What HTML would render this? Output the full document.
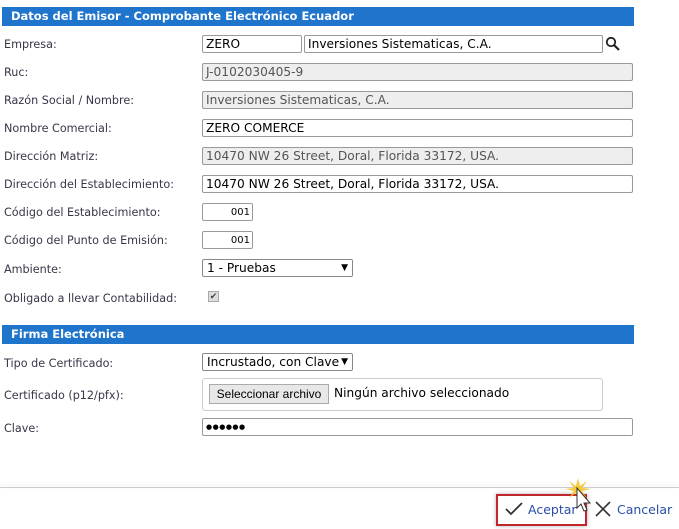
<!DOCTYPE html>
<html><head><meta charset="utf-8"><style>
body{margin:0;width:679px;height:529px;background:#fff;font-family:Verdana,"DejaVu Sans",sans-serif;font-size:11px;color:#3a3548;position:relative;overflow:hidden}
.hd{position:absolute;left:2px;width:632px;height:19px;background:#1f74cc;color:#fff;font-weight:bold;font-size:11.5px;line-height:19px;padding-left:9px;box-sizing:border-box}
.lb{position:absolute;left:4px;font-size:11.2px}
.in{position:absolute;height:18px;border:1px solid #999;border-radius:2px;box-sizing:border-box;font-size:12.2px;line-height:17px;padding-left:3px;color:#000;background:#fff;white-space:nowrap;overflow:hidden}
.ro{background:#eee;color:#555}
.sel{position:absolute;height:18px;border:1px solid #888;border-radius:2px;box-sizing:border-box;font-size:12.2px;line-height:17px;padding-left:4px;color:#000;background:#fff;overflow:hidden;white-space:nowrap}
.sel:after{content:"▼";position:absolute;right:4px;top:0;font-size:9px;background:#fff;padding-left:2px}
</style></head><body>
<div class="hd" style="top:7px">Datos del Emisor - Comprobante Electrónico Ecuador</div>
<div class="lb" style="top:38px">Empresa:</div>
<div class="in" style="left:202px;top:35px;width:100px">ZERO</div>
<div class="in" style="left:304px;top:35px;width:299px">Inversiones Sistematicas, C.A.</div>
<svg style="position:absolute;left:605px;top:36px" width="16" height="16"><circle cx="6" cy="6" r="4.2" fill="none" stroke="#222" stroke-width="1.8"/><line x1="9" y1="9" x2="14" y2="14" stroke="#222" stroke-width="2.2"/></svg>
<div class="lb" style="top:66px">Ruc:</div>
<div class="in ro" style="left:202px;top:63px;width:431px">J-0102030405-9</div>
<div class="lb" style="top:94px">Razón Social / Nombre:</div>
<div class="in ro" style="left:202px;top:91px;width:431px">Inversiones Sistematicas, C.A.</div>
<div class="lb" style="top:122px">Nombre Comercial:</div>
<div class="in" style="left:202px;top:119px;width:431px">ZERO COMERCE</div>
<div class="lb" style="top:150px">Dirección Matriz:</div>
<div class="in ro" style="left:202px;top:147px;width:431px">10470 NW 26 Street, Doral, Florida 33172, USA.</div>
<div class="lb" style="top:178px">Dirección del Establecimiento:</div>
<div class="in" style="left:202px;top:175px;width:431px">10470 NW 26 Street, Doral, Florida 33172, USA.</div>
<div class="lb" style="top:206px">Código del Establecimiento:</div>
<div class="in" style="left:202px;top:203px;width:51px;text-align:right;padding-right:2px;font-size:10px">001</div>
<div class="lb" style="top:234px">Código del Punto de Emisión:</div>
<div class="in" style="left:202px;top:231px;width:51px;text-align:right;padding-right:2px;font-size:10px">001</div>
<div class="lb" style="top:263px">Ambiente:</div>
<div class="sel" style="left:202px;top:259px;width:151px">1 - Pruebas</div>
<div class="lb" style="top:292px">Obligado a llevar Contabilidad:</div>
<div style="position:absolute;left:208px;top:291px;width:11px;height:11px;border:1px solid #aaa;background:#ddd;font-size:9px;line-height:11px;text-align:center;color:#444;box-sizing:border-box">✔</div>
<div class="hd" style="top:325px">Firma Electrónica</div>
<div class="lb" style="top:357px">Tipo de Certificado:</div>
<div class="sel" style="left:202px;top:353px;width:151px">Incrustado, con Clave</div>
<div class="lb" style="top:389px">Certificado (p12/pfx):</div>
<div style="position:absolute;left:202px;top:378px;width:401px;height:33px;border:1px solid #ccc;border-radius:3px;box-sizing:border-box"></div>
<div style="position:absolute;left:209px;top:384px;width:120px;height:20px;border:1px solid #aaa;background:#e8e8e8;box-sizing:border-box;font-family:Arial,'Liberation Sans',sans-serif;font-size:12px;line-height:18px;text-align:center;color:#000">Seleccionar archivo</div>
<div style="position:absolute;left:334px;top:386px;font-size:12.2px;color:#000">Ningún archivo seleccionado</div>
<div class="lb" style="top:422px">Clave:</div>
<div class="in" style="left:202px;top:418px;width:431px;font-size:7px;letter-spacing:0.5px">●●●●●●</div>
<div style="position:absolute;left:0;top:487px;width:679px;height:1px;background:#ccc;box-shadow:0 -2px 4px rgba(0,0,0,.12)"></div>
<div style="position:absolute;left:496px;top:494px;width:91px;height:32px;border:2px solid #c0262b;box-sizing:border-box;box-shadow:0 0 4px rgba(0,0,0,.3)"></div>
<svg style="position:absolute;left:505px;top:502px" width="18" height="14"><path d="M1 7 L6 12 L17 1" fill="none" stroke="#333" stroke-width="1.8"/></svg>
<div style="position:absolute;left:528px;top:502px;font-size:12.5px;color:#2a4fa8">Aceptar</div>
<svg style="position:absolute;left:595px;top:501px" width="16" height="16"><path d="M1 1L15 15M15 1L1 15" stroke="#333" stroke-width="1.6"/></svg>
<div style="position:absolute;left:617px;top:502px;font-size:12.5px;color:#2a4fa8">Cancelar</div>
<svg style="position:absolute;left:565px;top:478px" width="30" height="36"><polygon points="13,0 15,8 22,3 17,10 26,11 17,13 22,20 15,15 13,23 11,15 4,20 9,13 0,11 9,10 4,3 11,8" fill="#f4c21c" opacity=".85"/><path d="M12 10 L12 30 L16 26 L19 33 L22 32 L19 25 L25 25 Z" fill="#fff" stroke="#333" stroke-width="1"/></svg>
</body></html>
